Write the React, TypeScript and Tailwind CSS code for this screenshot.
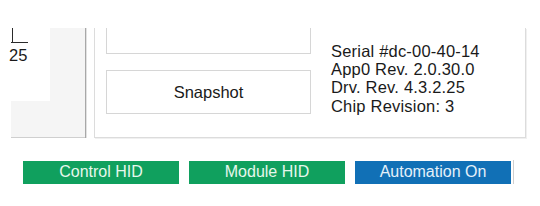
export default function App() {
  return (
    <div className="relative h-[206px] w-[540px] overflow-hidden bg-white font-['Liberation_Sans',Arial,sans-serif] text-[#1a1a1a]">
      {/* page is scrolled: everything above y=28 is cut off */}
      <div className="h-[28px]" />

      <div className="flex h-[110px]">
        {/* left panel (clipped) */}
        <div className="flex w-[86px] flex-col border-r border-[#a8a8a8] shadow-[1px_0_0_#e2e2e2]">
          <div className="flex h-[73px]">
            <div className="w-[50px] bg-white">
              <div className="ml-[11px] h-[15px] w-[17px] border-b-[1.5px] border-[#2a2a2a]">
                <div className="ml-[1px] h-full border-l-[1.5px] border-[#2a2a2a]" />
              </div>
              <div className="ml-[9px] mt-[3px] text-[16.5px] leading-[18px]">25</div>
            </div>
            <div className="flex-1 bg-[#f5f5f5]" />
          </div>
          <div className="ml-[11px] flex-1 border-b border-[#cfcfcf] bg-[#f5f5f5]" />
        </div>

        {/* right panel (clipped) */}
        <div className="ml-[8px] flex w-[432px] border-x border-b border-[#dcdcdc] pl-[11px] shadow-[1px_1px_0_#f0f0f0]">
          <div className="flex w-[205px] flex-col">
            <div className="h-[26px] border-x border-b border-[#d6d6d6]" />
            <button
              type="button"
              className="mt-[16px] h-[44px] w-full border border-[#d6d6d6] bg-white text-[16.5px] text-[#1a1a1a]"
            >
              Snapshot
            </button>
          </div>
          <div className="ml-[20px] pt-[13.5px] text-[16.5px] leading-[18.4px] tracking-[0.2px]">
            <p>Serial #dc-00-40-14</p>
            <p>App0 Rev. 2.0.30.0</p>
            <p>Drv. Rev. 4.3.2.25</p>
            <p>Chip Revision: 3</p>
          </div>
        </div>
      </div>

      {/* status buttons */}
      <div className="ml-[23px] mt-[22px] flex items-center gap-[10px]">
        <div className="flex h-[23px] w-[156px] items-center justify-center bg-[#10a05e] text-[16px] text-[#e6f7ec]">
          Control HID
        </div>
        <div className="flex h-[23px] w-[156px] items-center justify-center bg-[#10a05e] text-[16px] text-[#e6f7ec]">
          Module HID
        </div>
        <div className="flex items-center">
          <div className="flex h-[23px] w-[156px] items-center justify-center bg-[#1170b6] text-[16px] text-[#e4f0fa]">
            Automation On
          </div>
          <div className="ml-[2px] h-[24px] w-px bg-[#cfcfcf]" />
        </div>
      </div>
    </div>
  );
}
